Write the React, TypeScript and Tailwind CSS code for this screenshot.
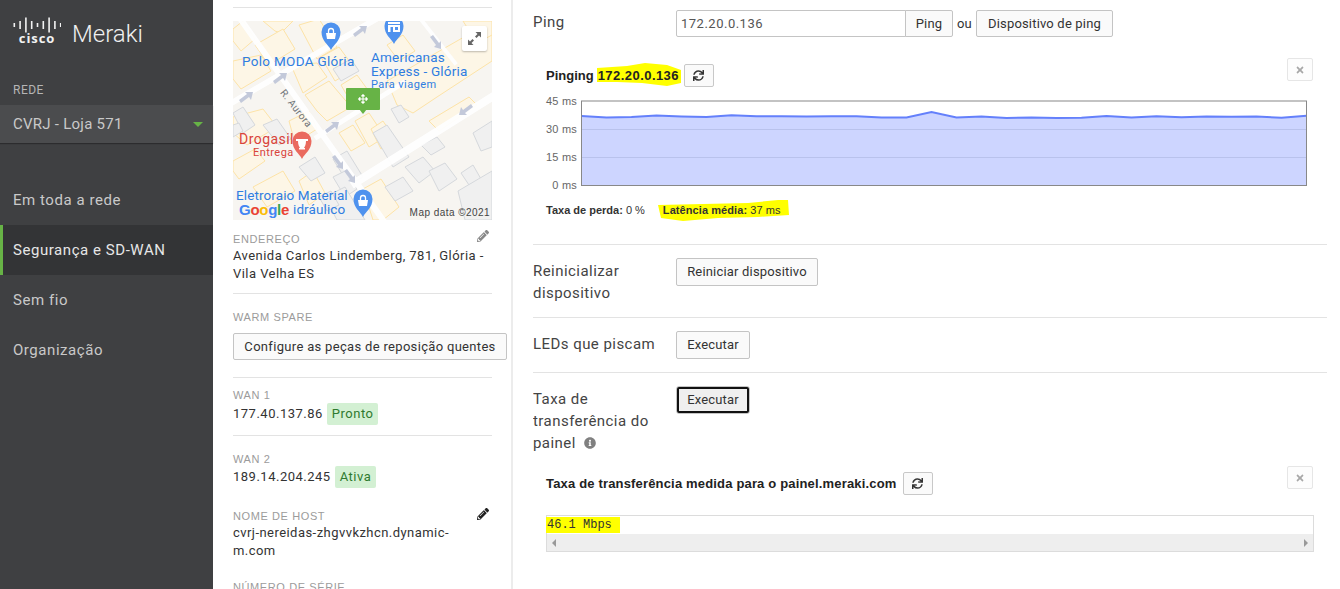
import React from "react";
import { FaSync, FaTimes, FaInfoCircle, FaPencilAlt, FaArrowsAlt } from "react-icons/fa";

const arial = "font-['Liberation_Sans',Arial,sans-serif]";
const roboto = "font-['Roboto',sans-serif]";

function Logo() {
  const h = [4, 8, 15, 8, 4, 8, 15, 8, 4];
  return (
    <div className="flex items-start h-[30px]">
      <div className="w-[48px] flex flex-col items-center">
        <svg width="48" height="16" viewBox="0 0 48 16">
          {h.map((v, i) => (
            <rect key={i} x={0.5 + i * 5.8} y={(15 - v) / 2 + 0.5} width="1.6" height={v} fill="#f2f2f2" />
          ))}
        </svg>
        <span className="text-[13px] leading-[10px] font-bold tracking-[0.9px] text-[#f2f2f2] font-['Open_Sans',sans-serif]">cisco</span>
      </div>
      <span className="ml-[11px] mt-[1px] text-[24px] leading-[32px] font-light text-[#f0f0f0] font-['Roboto',sans-serif]">Meraki</span>
    </div>
  );
}

function Sidebar() {
  const item = "h-[50px] flex items-center pl-[13px] text-[15px] tracking-[0.55px] text-[#c9c9c9]";
  return (
    <aside className="w-[213px] shrink-0 h-full bg-[#3f4042] font-['Roboto',sans-serif]">
      <div className="pt-[17px] pl-[13px]"><Logo /></div>
      <div className="pl-[13px] mt-[36px] text-[12px] leading-[14px] tracking-[0.5px] text-[#b5b5b5]">REDE</div>
      <div className="mt-[8px] h-[38px] bg-[#4b4c4e] flex items-center justify-between pl-[13px] pr-[10px] text-[15px] tracking-[0.25px] text-[#c9c9c9] shadow-[0_1px_1px_rgba(0,0,0,0.3)]">
        <span>CVRJ - Loja 571</span>
        <span className="w-0 h-0 border-l-[5px] border-r-[5px] border-t-[5px] border-l-transparent border-r-transparent border-t-[#67b346]" />
      </div>
      <div className="mt-[32px]">
        <div className={item}>Em toda a rede</div>
        <div className={item + " bg-[#333436] border-l-[3px] border-[#67b346] !pl-[10px] text-[#e6e6e6]"}>Segurança e SD-WAN</div>
        <div className={item}>Sem fio</div>
        <div className={item}>Organização</div>
      </div>
    </aside>
  );
}

function Pin({ x, y, color, kind }: { x: number; y: number; color: string; kind: "bag" | "store" | "mortar" }) {
  return (
    <g transform={`translate(${x} ${y})`}>
      <path d="M0 14 C-3 8 -9.5 5 -9.5 -4 A9.5 9.5 0 1 1 9.5 -4 C9.5 5 3 8 0 14Z" fill={color} />
      {kind === "bag" && (
        <g fill="none" stroke="#fff" strokeWidth="1.3">
          <path d="M-5 -3 H5 L4 3 H-4Z" fill="#fff" stroke="none" />
          <path d="M-2.5 -3 V-5 A2.5 2.5 0 0 1 2.5 -5 V-3" />
        </g>
      )}
      {kind === "store" && (
        <g fill="#fff">
          <rect x="-6" y="-8" width="12" height="2" />
          <path d="M-6 -5 H6 V2 H-6Z M-3.5 -3 V2 H-1 V-3Z M1 -3 V-0 H4 V-3Z" fillRule="evenodd" />
        </g>
      )}
      {kind === "mortar" && (
        <g fill="#fff">
          <path d="M-6 -6 H6 V-4 H4 C4 0 2.5 2 2 3 H-2 C-2.5 2 -4 0 -4 -4 H-6Z" />
          <rect x="-3" y="3" width="6" height="1.5" />
        </g>
      )}
    </g>
  );
}

const yellowBlocks = [
  "0,8 10,0 22,18 8,30 0,20", "30,0 60,0 48,12 42,10", "22,24 50,8 62,28 36,44", "0,40 28,34 38,50 8,68 0,58",
  "66,4 86,-2 104,26 84,38", "58,44 84,42 94,56 70,72", "88,36 106,26 122,48 102,60", "72,74 96,60 118,86 94,100 84,90",
  "108,64 124,54 140,76 122,88", "0,96 30,88 44,106 14,124 0,112", "56,100 76,90 84,108 62,122", "106,112 120,104 132,122 118,130",
  "122,100 136,92 152,116 136,126", "138,108 150,100 162,118 148,128", "130,168 148,158 166,186 150,199 140,199",
  "0,140 22,128 32,140 6,158 0,150", "20,166 50,150 62,170 34,186", "154,60 259,0 259,40 204,76 180,92 164,84", "230,0 259,0 259,14 244,22",
  "196,100 236,76 244,84 206,110", "66,160 80,150 92,172 76,184", "154,24 170,14 182,30 166,40",
];
const grayBlocks = [
  "100,48 118,38 126,50 108,60", "0,92 10,86 22,104 10,112", "30,104 44,98 58,118 46,124", "158,88 168,84 176,96 166,102",
  "140,112 154,104 176,136 160,146", "66,146 82,136 92,152 78,160", "100,138 114,130 130,156 116,164", "100,156 112,150 124,168 112,176",
  "172,146 190,136 202,150 186,162", "196,150 212,142 224,158 206,170", "228,152 240,144 248,158 236,164", "240,112 259,100 259,126 248,130",
  "188,124 204,116 212,126 198,134", "152,166 170,156 180,170 162,180", "225,170 259,150 259,199 232,199", "92,176 112,166 132,199 104,199",
  "0,104 6,102 10,110 0,116", "86,176 98,170 106,184 94,190",
];

function MapBox() {
  return (
    <div className="relative w-[259px] h-[199px] overflow-hidden bg-[#f7f5f1]">
      <svg className="absolute inset-0" width="259" height="199" viewBox="0 0 259 199">
        {yellowBlocks.map((p, i) => (
          <polygon key={i} points={p} fill="#fdf6e6" stroke="#fde3a7" strokeWidth="1" />
        ))}
        {grayBlocks.map((p, i) => (
          <polygon key={i} points={p} fill="#f0f0f0" stroke="#d5d8dc" strokeWidth="1" />
        ))}
        <g stroke="#ffffff" fill="none" strokeLinecap="square" opacity="0.95">
          <path d="M-5 84 L150 -6" strokeWidth="6" />
          <path d="M6 -4 L150 199" strokeWidth="6" />
          <path d="M84 116 L170 62" strokeWidth="5" />
          <path d="M122 162 L259 76" strokeWidth="8" />
          <path d="M186 -4 L222 42" strokeWidth="4" />
        </g>
        <g fill="#c3c9da">
          <path d="M6 79 L14 73 L12 71 L20 71 L18 79 L16 76 L8 82Z" />
          <path d="M40 60 L48 54 L46 52 L54 52 L52 60 L50 57 L42 63Z" />
          <path d="M120 13 L128 7 L126 5 L134 5 L132 13 L130 10 L122 16Z" />
          <path d="M92 109 L100 103 L98 101 L106 101 L104 109 L102 106 L94 112Z" />
          <path d="M240 86 L232 92 L234 94 L226 94 L228 86 L230 89 L238 83Z" />
          <path d="M200 14 L206 22 L208 20 L208 28 L201 26 L203 24 L197 16Z" />
          <path d="M102 134 L108 142 L110 140 L110 148 L103 146 L105 144 L99 136Z" />
          <path d="M114 148 L120 156 L122 154 L122 162 L115 160 L117 158 L111 150Z" />
        </g>
        <Pin x={98} y={15} color="#4f92ee" kind="bag" />
        <Pin x={161} y={9} color="#4f92ee" kind="store" />
        <Pin x={69} y={124} color="#ea6a5e" kind="mortar" />
        <Pin x={130} y={182} color="#4f92ee" kind="bag" />
      </svg>
      <div className={`absolute left-[9px] top-[32px] text-[13.5px] leading-[16px] tracking-[0.3px] text-[#2f7de1] ${roboto}`}>Polo MODA Glória</div>
      <div className={`absolute left-[138px] top-[29px] text-[13.5px] leading-[14px] tracking-[0.2px] text-[#2f7de1] ${roboto}`}>Americanas<br />Express - Glória</div>
      <div className={`absolute left-[138px] top-[57px] text-[11px] leading-[14px] text-[#2f7de1] ${roboto}`}>Para viagem</div>
      <div className={`absolute left-[49px] top-[64px] rotate-[52deg] origin-left text-[10px] leading-[12px] text-[#6f7378] ${roboto}`}>R. Aurora</div>
      <div className={`absolute left-[6px] top-[110px] text-[14px] leading-[16px] text-[#d9433a] ${roboto}`}>Drogasil</div>
      <div className={`absolute left-[20px] top-[125px] text-[11px] leading-[13px] text-[#d9433a] ${roboto}`}>Entrega</div>
      <div className={`absolute left-[3px] top-[167px] text-[13.5px] leading-[15px] tracking-[0.1px] text-[#2f7de1] ${roboto}`}>Eletroraio Material</div>
      <div className={`absolute left-[60px] top-[181px] text-[13.5px] leading-[15px] tracking-[0.1px] text-[#2f7de1] ${roboto}`}>idráulico</div>
      <div className={`absolute left-[6px] top-[180px] text-[15px] leading-[17px] font-bold tracking-[-0.3px] ${arial}`}>
        <span className="text-[#4285f4]">G</span><span className="text-[#ea4335]">o</span><span className="text-[#fbbc05]">o</span><span className="text-[#4285f4]">g</span><span className="text-[#34a853]">l</span><span className="text-[#ea4335]">e</span>
      </div>
      <div className={`absolute right-[2px] bottom-[1px] text-[10px] leading-[12px] text-[#444] ${arial}`}>Map data ©2021</div>
      <div className="absolute left-[113px] top-[67px] w-[34px] h-[22px] rounded-[1px] bg-[#67b346] flex items-center justify-center text-white">
        <FaArrowsAlt size={10} />
        <span className="absolute left-[13px] top-[21px] w-0 h-0 border-l-[4px] border-r-[4px] border-t-[5px] border-l-transparent border-r-transparent border-t-[#67b346]" />
      </div>
      <div className="absolute right-[5px] top-[5px] w-[25px] h-[25px] bg-white rounded-[2px] shadow-[0_1px_2px_rgba(0,0,0,0.25)] flex items-center justify-center">
        <svg width="15" height="15" viewBox="0 0 15 15" fill="#666">
          <path d="M8.5 1 H14 V6.5 L12 4.5 L9.5 7 L8 5.5 L10.5 3Z" />
          <path d="M6.5 14 H1 V8.5 L3 10.5 L5.5 8 L7 9.5 L4.5 12Z" />
        </svg>
      </div>
    </div>
  );
}

function Label({ children }: { children: React.ReactNode }) {
  return <div className={`text-[11px] leading-[14px] tracking-[0.6px] text-[#9b9b9b] ${arial}`}>{children}</div>;
}

function Badge({ children }: { children: React.ReactNode }) {
  return <span className="inline-block ml-[4px] px-[5px] h-[22px] leading-[21px] rounded-[2px] bg-[#d3f0d3] text-[#2f7a2f]">{children}</span>;
}

function Middle() {
  const divider = "w-[259px] border-t border-[#e3e3e3]";
  return (
    <section className={`w-[300px] shrink-0 h-full overflow-hidden border-r-2 border-[#ececec] pl-[20px] pt-[7px] text-[13px] tracking-[0.45px] text-[#333] ${roboto}`}>
      <div className={divider} />
      <div className="mt-[13px]"><MapBox /></div>
      <div className="w-[259px] mt-[12px] relative">
        <Label>ENDEREÇO</Label>
        <FaPencilAlt size={12} className="absolute right-[3px] top-[-2px] text-[#888]" />
        <div className="mt-[1px] leading-[18px]">Avenida Carlos Lindemberg, 781, Glória -<br />Vila Velha ES</div>
      </div>
      <div className={divider + " mt-[10px]"} />
      <div className="mt-[16px]"><Label>WARM SPARE</Label></div>
      <button className="mt-[9px] w-[274px] h-[27px] rounded-[2px] border border-[#c4c4c4] bg-[#fafafa] text-[13px] tracking-[0.32px] text-[#333]">Configure as peças de reposição quentes</button>
      <div className={divider + " mt-[17px]"} />
      <div className="mt-[10px]"><Label>WAN 1</Label></div>
      <div className="mt-[1px] h-[22px] leading-[22px] tracking-[0.5px]">177.40.137.86<Badge>Pronto</Badge></div>
      <div className={divider + " mt-[10px]"} />
      <div className="mt-[16px]"><Label>WAN 2</Label></div>
      <div className="mt-[0px] h-[22px] leading-[22px] tracking-[0.5px]">189.14.204.245<Badge>Ativa</Badge></div>
      <div className="w-[259px] mt-[21px] relative">
        <Label>NOME DE HOST</Label>
        <FaPencilAlt size={12} className="absolute right-[3px] top-[-1px] text-[#222]" />
        <div className="mt-[1px] leading-[18px]">cvrj-nereidas-zhgvvkzhcn.dynamic-<br />m.com</div>
      </div>
      <div className="mt-[20px]"><Label>NÚMERO DE SÉRIE</Label></div>
    </section>
  );
}

function Btn({ children, className = "" }: { children: React.ReactNode; className?: string }) {
  return (
    <button className={`h-[28px] px-[10px] rounded-[2px] border border-[#c4c4c4] bg-[#fafafa] text-[13px] tracking-[0.18px] text-[#333] ${roboto} ` + className}>{children}</button>
  );
}

function SmallBtn({ className = "" }: { className?: string }) {
  return (
    <button className={"w-[30px] h-[23px] rounded-[2px] border border-[#c8c8c8] bg-[#fafafa] flex items-center justify-center text-[#333] " + className}>
      <FaSync size={11} />
    </button>
  );
}

function CloseBtn() {
  return (
    <button className="w-[26px] h-[23px] rounded-[2px] border border-[#e6e6e6] bg-[#fdfdfd] flex items-center justify-center text-[#a8a8a8]">
      <FaTimes size={10} />
    </button>
  );
}

const vals = [115.5, 117, 116.5, 115, 116, 116.5, 114.7, 115.8, 115.7, 116, 115.8, 115.8, 117, 117, 111.5, 117, 116, 117.5, 117, 117.5, 117.3, 115.5, 117, 115.8, 116.8, 116, 116.2, 116, 117.3, 115.3];

function Chart() {
  const pts = vals.map((v, i) => `${i * 25 + 35.5},${v - 99.5}`).join(" ");
  return (
    <svg width="762" height="90" viewBox="0 0 762 90" className="block overflow-visible">
      <polygon points={`35.5,85.5 ${pts} 760.5,85.5`} fill="#cdd5ff" />
      <line x1="35" x2="761" y1="29.5" y2="29.5" stroke="#b9c2ec" />
      <line x1="35" x2="761" y1="57.5" y2="57.5" stroke="#b9c2ec" />
      <polyline points={pts} fill="none" stroke="#6480fb" strokeWidth="2" />
      <rect x="35.5" y="1" width="725" height="84.5" fill="none" stroke="#888" />
      {[["45 ms", 6], ["30 ms", 34], ["15 ms", 62], ["0 ms", 90]].map(([t, y]) => (
        <text key={t as string} x="31" y={y as number} textAnchor="end" fontSize="11" letterSpacing="0.2" fill="#666" fontFamily="Liberation Sans, Arial, sans-serif" dy="-1">{t}</text>
      ))}
    </svg>
  );
}

function Row({ label, children, className = "" }: { label: React.ReactNode; children: React.ReactNode; className?: string }) {
  return (
    <div className={"flex border-t border-[#e3e3e3] " + className}>
      <div className={`w-[143px] shrink-0 text-[15px] leading-[22px] tracking-[0.45px] text-[#444] ${roboto}`}>{label}</div>
      <div>{children}</div>
    </div>
  );
}

function Main() {
  return (
    <main className={`w-[794px] ml-[20px] shrink-0 h-full overflow-hidden pt-[10px] ${arial}`}>
      <div className="flex">
        <div className={`w-[143px] text-[15px] leading-[24px] tracking-[0.45px] text-[#444] ${roboto}`}>Ping</div>
        <div className="flex items-center h-[27px] text-[13px] text-[#333]">
          <div className={`w-[230px] h-[27px] border border-[#c4c4c4] rounded-l-[2px] pl-[4px] leading-[25px] tracking-[0.5px] text-[#555] ${roboto}`}>172.20.0.136</div>
          <Btn className="!h-[27px] -ml-[1px] !rounded-l-none w-[48px] !px-0">Ping</Btn>
          <span className={`ml-[4px] w-[19px] ${roboto}`}>ou</span>
          <Btn className="!h-[27px] w-[137px] !px-0">Dispositivo de ping</Btn>
        </div>
      </div>

      <div className="flex items-start justify-between pl-[13px] pr-[14px] mt-[21px] h-[42px]">
        <div className="flex items-center h-[23px] mt-[6px] text-[13px] font-bold text-[#222]">
          <span>Pinging</span>
          <span className="relative isolate ml-[4px] mr-[5px] h-[21px] leading-[21px] tracking-[0.45px]">
            <svg className="absolute left-[-1px] top-[-2px] -z-10" width="84" height="24" viewBox="0 0 84 24">
              <path d="M0 5 L30 3 L48 0 L70 2 L84 7 L84 20 L70 23 L45 20 L20 19 L0 19Z" fill="#ffff00" />
            </svg>
            172.20.0.136
          </span>
          <SmallBtn />
        </div>
        <CloseBtn />
      </div>
      <div className="pl-[13px]"><Chart /></div>
      <div className="flex items-center pl-[13px] mt-[10px] h-[20px] text-[11px] text-[#333]">
        <span><b>Taxa de perda:</b> 0 %</span>
        <span className="relative isolate ml-[18px] h-[20px] leading-[20px] tracking-[0.08px]">
          <svg className="absolute left-[-5px] top-[-2px] -z-10" width="131" height="24" viewBox="0 0 131 24">
            <path d="M0 7 L90 5 L120 2 L130 2 L131 17 L100 19 L60 20 L25 23 L3 20Z" fill="#ffff00" />
          </svg>
          <b>Latência média:</b> 37 ms
        </span>
      </div>

      <Row label={<>Reinicializar<br />dispositivo</>} className="mt-[24px] pt-[15px] h-[73px]">
        <div className="-mt-[2px]"><Btn className="w-[142px] !px-0">Reiniciar dispositivo</Btn></div>
      </Row>
      <Row label="LEDs que piscam" className="h-[55px] pt-[15px]">
        <div className="-mt-[2px]"><Btn className="w-[74px] !px-0">Executar</Btn></div>
      </Row>
      <Row label={<>Taxa de<br />transferência do<br /><span className="inline-flex items-center">painel<FaInfoCircle size={12} className="ml-[8px] text-[#808080]" /></span></>} className="pt-[15px]">
        <div className="-mt-[2px]"><Btn className="w-[74px] !px-0 outline-2 outline-offset-[-3px] outline-[#111] rounded-[3px] !bg-[#efefef]">Executar</Btn></div>
      </Row>

      <div className="flex items-start justify-between pl-[13px] pr-[14px] mt-[12px] h-[49px]">
        <div className="flex items-center h-[23px] mt-[6px] text-[13px] font-bold tracking-[0.17px] text-[#222]">
          <span>Taxa de transferência medida para o painel.meraki.com</span>
          <SmallBtn className="ml-[6px]" />
        </div>
        <CloseBtn />
      </div>
      <div className="ml-[13px] w-[768px] h-[37px] border border-[#dcdcdc] flex flex-col">
        <div className="h-[18px] pt-[1px] font-['Liberation_Mono',monospace] text-[12px] leading-[16px] text-[#333]">
          <span className="inline-block h-[16px] w-[74px] -ml-[1px] pl-[1px] bg-[#ffff00]">46.1 Mbps</span>
        </div>
        <div className="flex-1 bg-[#eeeeee] flex items-center justify-between px-[5px]">
          <span className="w-0 h-0 border-y-[4px] border-r-[4px] border-y-transparent border-r-[#999]" />
          <span className="w-0 h-0 border-y-[4px] border-l-[4px] border-y-transparent border-l-[#999]" />
        </div>
      </div>
    </main>
  );
}

export default function App() {
  return (
    <div className="flex w-[1340px] h-[589px] overflow-hidden bg-white">
      <Sidebar />
      <Middle />
      <Main />
    </div>
  );
}
